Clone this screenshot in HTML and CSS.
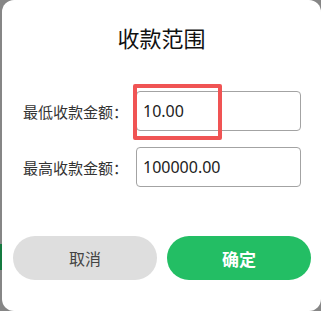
FILE: index.html
```html
<!DOCTYPE html>
<html lang="zh-CN">
<head>
  <meta charset="UTF-8" />
  <meta name="viewport" content="width=device-width, initial-scale=1.0" />
  <title>收款范围</title>
  <link rel="stylesheet" href="styles.css">
</head>
<body>

  <div class="dialog">
    <h2 class="dialog-title">收款范围</h2>

    <div class="range-form">
      <div class="range-row">
        <label class="range-label" for="minAmount">最低收款金额：</label>
        <div class="range-field">
          <input id="minAmount" class="range-input" type="text" value="10.00" />
          <!-- highlight mark -->
          <div class="mark"></div>
        </div>
      </div>

      <div class="range-row">
        <label class="range-label" for="maxAmount">最高收款金额：</label>
        <div class="range-field">
          <input id="maxAmount" class="range-input" type="text" value="100000.00" />
        </div>
      </div>
    </div>

    <div class="dialog-buttons">
      <button class="btn btn-cancel">取消</button>
      <button class="btn btn-ok">确定</button>
    </div>
  </div>

</body>
</html>
```

FILE: styles.css
```css
html, body {
  margin: 0;
  padding: 0;
  width: 100%;
  height: 100%;
  overflow: hidden;
  font-family: "Noto Sans", "Noto Sans CJK SC", sans-serif;
  background: #868686;
}

body {
  display: flex;
  background:
    linear-gradient(#868686 244px, #157a40 244px, #157a40 270px, #868686 270px) left top / 2px 100% no-repeat,
    #868686;
}

.dialog {
  margin-left: 2px;
  width: 319px;
  height: 311px;
  background: #fff;
  border-radius: 12px;
  box-sizing: border-box;
  display: flex;
  flex-direction: column;
}

.dialog-title {
  margin: 0;
  padding-top: 24px;
  font-size: 22px;
  line-height: 28px;
  font-weight: normal;
  color: #111;
  text-align: center;
}

.range-form {
  margin-top: 39px;
  padding-left: 21px;
  display: flex;
  flex-direction: column;
  gap: 16px;
}

.range-row {
  display: flex;
  align-items: center;
}

.range-label {
  width: 113px;
  font-size: 15px;
  color: #333;
  white-space: nowrap;
}

.range-field {
  position: relative;
}

.range-input {
  width: 165px;
  height: 40px;
  box-sizing: border-box;
  border: 1px solid #a3a3a3;
  border-radius: 4px;
  padding: 0 6px;
  font-family: "Noto Sans", "Noto Sans CJK SC", sans-serif;
  font-size: 16px;
  color: #222;
  outline: none;
}

.mark {
  position: absolute;
  left: -3px;
  top: -7px;
  width: 89px;
  height: 56px;
  box-sizing: border-box;
  border: 4px solid #f05454;
  border-radius: 2px;
  pointer-events: none;
}

.dialog-buttons {
  margin-top: 49px;
  padding-left: 11px;
  display: flex;
  gap: 10px;
}

.btn {
  width: 144px;
  height: 44px;
  border: none;
  border-radius: 22px;
  font-family: "Noto Sans", "Noto Sans CJK SC", sans-serif;
  font-size: 16px;
  cursor: pointer;
}

.btn-cancel {
  background: #dedede;
  color: #444;
}

.btn-ok {
  background: #23be64;
  color: #fff;
  font-size: 17px;
  font-weight: bold;
}
```
